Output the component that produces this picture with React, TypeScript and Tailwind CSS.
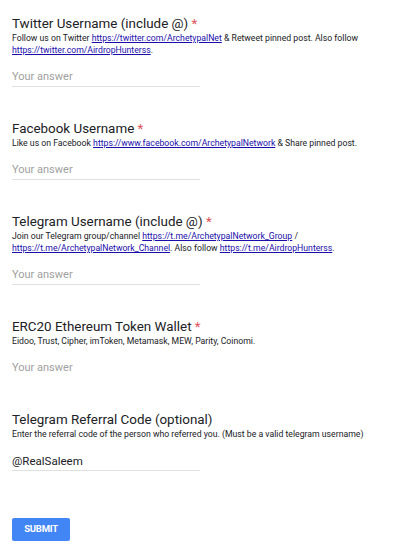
const link = 'text-[#1a0dab] underline';

interface QuestionProps {
  title: string;
  required?: boolean;
  children: React.ReactNode;
  value?: string;
  line?: boolean;
}

function Question({ title, required, children, value, line = true }: QuestionProps) {
  return (
    <div className="mb-[34px]">
      <div className="text-[13.4px] leading-[16px] text-[#202124]">
        {title}
        {required && <span className="text-[#e0525a]"> *</span>}
      </div>
      <div className="text-[8.7px] leading-[12px] text-[#202124]">{children}</div>
      <div
        className={`mt-[14px] w-[188px] pb-[2px] border-b ${line ? 'border-[#e0e0e0]' : 'border-transparent'}`}
      >
        {value ? (
          <span className="text-[11.5px] leading-[14px] block text-[#202124]">{value}</span>
        ) : (
          <span className="text-[11px] leading-[14px] block text-[#a0a0a0]">Your answer</span>
        )}
      </div>
    </div>
  );
}

export default function App() {
  return (
    <div className="min-h-screen bg-white px-3 pt-[16px] font-['Roboto',sans-serif]">
      <Question title="Twitter Username (include @)" required>
        Follow us on Twitter <span className={link}>https://twitter.com/ArchetypalNet</span> &amp; Retweet
        pinned post. Also follow <span className={link}>https://twitter.com/AirdropHunterss</span>.
      </Question>

      <Question title="Facebook Username" required>
        Like us on Facebook <span className={link}>https://www.facebook.com/ArchetypalNetwork</span> &amp;
        Share pinned post.
      </Question>

      <Question title="Telegram Username (include @)" required>
        Join our Telegram group/channel <span className={link}>https://t.me/ArchetypalNetwork_Group</span> /{' '}
        <span className={link}>https://t.me/ArchetypalNetwork_Channel</span>. Also follow{' '}
        <span className={link}>https://t.me/AirdropHunterss</span>.
      </Question>

      <Question title="ERC20 Ethereum Token Wallet" required line={false}>
        Eidoo, Trust, Cipher, imToken, Metamask, MEW, Parity, Coinomi.
      </Question>

      <Question title="Telegram Referral Code (optional)" value="@RealSaleem">
        Enter the referral code of the person who referred you. (Must be a valid telegram username)
      </Question>

      <div className="pt-[10px]">
        <button className="w-[58px] h-[23px] rounded-[2px] bg-[#4285f4] text-white text-[9.5px] font-bold tracking-tight">
          SUBMIT
        </button>
      </div>
    </div>
  );
}
